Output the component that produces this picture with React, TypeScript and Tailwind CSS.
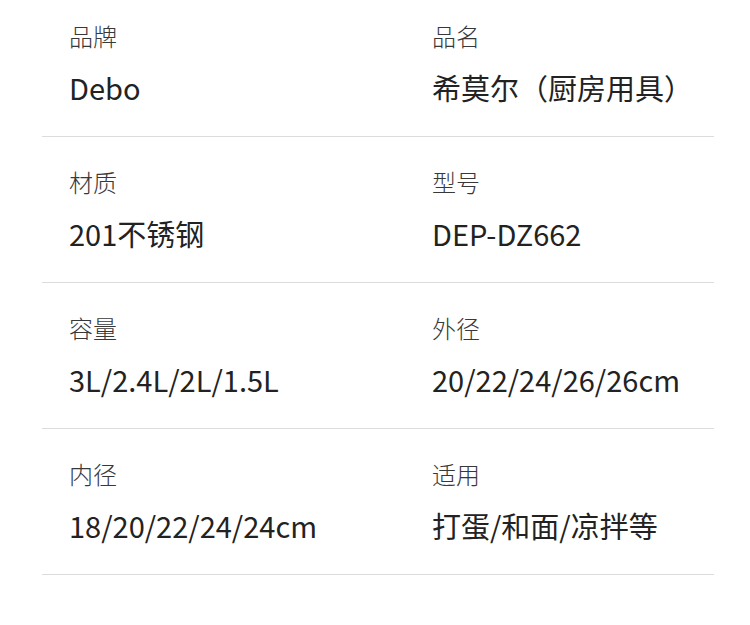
const rows: [string, string, string, string][] = [
  ['品牌', 'Debo', '品名', '希莫尔（厨房用具）'],
  ['材质', '201不锈钢', '型号', 'DEP-DZ662'],
  ['容量', '3L/2.4L/2L/1.5L', '外径', '20/22/24/26/26cm'],
  ['内径', '18/20/22/24/24cm', '适用', '打蛋/和面/凉拌等'],
];

function Cell({ label, value }: { label: string; value: string }) {
  return (
    <div className="flex flex-col">
      <div className="text-[24px] leading-[32px] text-[#383838] font-light">{label}</div>
      <div className="mt-[15px] text-[29px] leading-[40px] text-[#222]">{value}</div>
    </div>
  );
}

export default function App() {
  return (
    <div
      className="w-[750px] h-[625px] bg-white pl-[42px] pr-[36px]"
      style={{ fontFamily: '"Noto Sans CJK SC", "Noto Sans", sans-serif' }}
    >
      {rows.map((r, i) => (
        <div
          key={r[0]}
          className={`grid grid-cols-[363px_1fr] pl-[27px] pb-[29px] border-b border-[#dcdcdc] ${
            i === 0 ? 'pt-[20px]' : 'pt-[29px]'
          }`}
        >
          <Cell label={r[0]} value={r[1]} />
          <Cell label={r[2]} value={r[3]} />
        </div>
      ))}
    </div>
  );
}
